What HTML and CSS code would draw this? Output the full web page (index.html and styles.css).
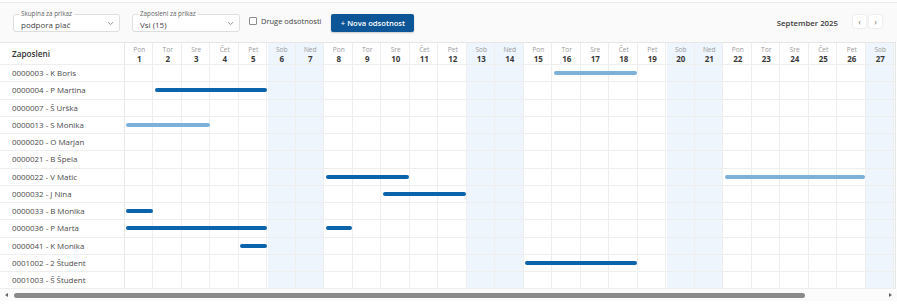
FILE: index.html
```html
<!DOCTYPE html>
<html>

<head>
	<link rel="stylesheet" href="styles.css">
</head>

<body>
	<div class="page">
		<div class="toolbar">
			<div class="select sel-group">
				<span class="select-label">Skupina za prikaz</span>
				<span class="select-value">podpora plač</span>
				<svg class="chev" width="7" height="5" viewBox="0 0 7 5"><path d="M1 1.2 L3.5 3.6 L6 1.2" fill="none" stroke="#8a8a8a" stroke-width="0.9"/></svg>
			</div>
			<div class="select sel-emp">
				<span class="select-label">Zaposleni za prikaz</span>
				<span class="select-value">Vsi (15)</span>
				<svg class="chev" width="7" height="5" viewBox="0 0 7 5"><path d="M1 1.2 L3.5 3.6 L6 1.2" fill="none" stroke="#8a8a8a" stroke-width="0.9"/></svg>
			</div>
			<label class="check"><span class="box"></span>Druge odsotnosti</label>
			<button class="btn-new">+ Nova odsotnost</button>
			<div class="month">September 2025</div>
			<div class="nav">
				<span class="nav-btn">&#8249;</span>
				<span class="nav-btn">&#8250;</span>
			</div>
		</div>

		<div class="grid-wrap">
			<div class="grid">
				<div class="row head">
					<div class="name">Zaposleni</div>
					<div class="days">
						<div class="day"><span>Pon</span><b>1</b></div>
						<div class="day"><span>Tor</span><b>2</b></div>
						<div class="day"><span>Sre</span><b>3</b></div>
						<div class="day"><span>Čet</span><b>4</b></div>
						<div class="day"><span>Pet</span><b>5</b></div>
						<div class="day"><span>Sob</span><b>6</b></div>
						<div class="day"><span>Ned</span><b>7</b></div>
						<div class="day"><span>Pon</span><b>8</b></div>
						<div class="day"><span>Tor</span><b>9</b></div>
						<div class="day"><span>Sre</span><b>10</b></div>
						<div class="day"><span>Čet</span><b>11</b></div>
						<div class="day"><span>Pet</span><b>12</b></div>
						<div class="day"><span>Sob</span><b>13</b></div>
						<div class="day"><span>Ned</span><b>14</b></div>
						<div class="day"><span>Pon</span><b>15</b></div>
						<div class="day"><span>Tor</span><b>16</b></div>
						<div class="day"><span>Sre</span><b>17</b></div>
						<div class="day"><span>Čet</span><b>18</b></div>
						<div class="day"><span>Pet</span><b>19</b></div>
						<div class="day"><span>Sob</span><b>20</b></div>
						<div class="day"><span>Ned</span><b>21</b></div>
						<div class="day"><span>Pon</span><b>22</b></div>
						<div class="day"><span>Tor</span><b>23</b></div>
						<div class="day"><span>Sre</span><b>24</b></div>
						<div class="day"><span>Čet</span><b>25</b></div>
						<div class="day"><span>Pet</span><b>26</b></div>
						<div class="day"><span>Sob</span><b>27</b></div>
					</div>
				</div>

				<div class="row">
					<div class="name">0000003 - K Boris</div>
					<div class="days"><span class="bar light" style="grid-column: 16 / 19"></span></div>
				</div>
				<div class="row">
					<div class="name">0000004 - P Martina</div>
					<div class="days"><span class="bar" style="grid-column: 2 / 6"></span></div>
				</div>
				<div class="row">
					<div class="name">0000007 - Š Urška</div>
					<div class="days"></div>
				</div>
				<div class="row">
					<div class="name">0000013 - S Monika</div>
					<div class="days"><span class="bar light" style="grid-column: 1 / 4"></span></div>
				</div>
				<div class="row">
					<div class="name">0000020 - O Marjan</div>
					<div class="days"></div>
				</div>
				<div class="row">
					<div class="name">0000021 - B Špela</div>
					<div class="days"></div>
				</div>
				<div class="row">
					<div class="name">0000022 - V Matic</div>
					<div class="days">
						<span class="bar" style="grid-column: 8 / 11"></span>
						<span class="bar light" style="grid-column: 22 / 27"></span>
					</div>
				</div>
				<div class="row">
					<div class="name">0000032 - J Nina</div>
					<div class="days"><span class="bar" style="grid-column: 10 / 13"></span></div>
				</div>
				<div class="row">
					<div class="name">0000033 - B Monika</div>
					<div class="days"><span class="bar" style="grid-column: 1 / 2"></span></div>
				</div>
				<div class="row">
					<div class="name">0000036 - P Marta</div>
					<div class="days">
						<span class="bar" style="grid-column: 1 / 6"></span>
						<span class="bar" style="grid-column: 8 / 9"></span>
					</div>
				</div>
				<div class="row">
					<div class="name">0000041 - K Monika</div>
					<div class="days"><span class="bar" style="grid-column: 5 / 6"></span></div>
				</div>
				<div class="row">
					<div class="name">0001002 - 2 Študent</div>
					<div class="days"><span class="bar" style="grid-column: 15 / 19"></span></div>
				</div>
				<div class="row">
					<div class="name">0001003 - Š Študent</div>
					<div class="days"></div>
				</div>
			</div>
		</div>

		<div class="hscroll">
			<span class="arrow left"></span>
			<div class="track"><div class="thumb"></div></div>
			<span class="arrow right"></span>
		</div>
	</div>
</body>

</html>
```

FILE: styles.css
```css
body {
	margin: 0;
	background: #ffffff;
	font-family: "Open Sans", "Noto Sans", sans-serif;
	color: #333333;
}

.page {
	width: 897px;
	height: 304px;
	padding-top: 2px;
	box-sizing: border-box;
	overflow: hidden;
}

.toolbar {
	height: 40px;
	border-top: 1px solid #ececec;
	background: #fafafa;
	display: flex;
	align-items: center;
	padding: 0 15px 0 13px;
	box-sizing: border-box;
}

.select {
	position: relative;
	height: 18px;
	border: 1px solid #dedede;
	border-radius: 3px;
	background: #ffffff;
	box-sizing: border-box;
	display: flex;
	align-items: center;
	padding: 3px 0 0 7px;
}

.sel-group {
	width: 107px;
}

.sel-emp {
	width: 108px;
	margin-left: 12px;
}

.select-label {
	position: absolute;
	left: 5px;
	top: -5px;
	padding: 0 2px;
	font-size: 6.3px;
	line-height: 8px;
	color: #666666;
	background: linear-gradient(#fafafa 50%, #ffffff 50%);
}

.select-value {
	font-size: 8px;
	color: #444444;
	flex: 1;
}

.chev {
	margin-right: 5px;
	margin-top: -2px;
}

.check {
	display: flex;
	align-items: center;
	margin-left: 9px;
	font-size: 7.5px;
	color: #444444;
	margin-top: -4px;
}

.box {
	width: 6px;
	height: 6px;
	border: 1px solid #8c8c8c;
	border-radius: 1px;
	background: #ffffff;
	margin-right: 4px;
	margin-top: 1px;
}

.btn-new {
	margin-left: 10px;
	width: 83px;
	height: 18px;
	border: none;
	border-radius: 2px;
	background: #0c5697;
	color: #ffffff;
	font-family: "Open Sans", sans-serif;
	font-size: 7.6px;
	font-weight: 600;
	padding: 0;
	box-shadow: 0 1px 2px rgba(0, 0, 0, 0.2);
}

.month {
	margin-left: auto;
	font-size: 7.8px;
	font-weight: 600;
	color: #3a3a3a;
}

.nav {
	display: flex;
	gap: 3px;
	margin-left: 15px;
	margin-top: -3px;
}

.nav-btn {
	width: 13px;
	height: 13px;
	border-radius: 2px;
	background: #ffffff;
	box-shadow: 0 0 2px rgba(0, 0, 0, 0.18);
	display: flex;
	align-items: center;
	justify-content: center;
	font-size: 9px;
	line-height: 9px;
	color: #777777;
}

.grid-wrap {
	border-top: 1px solid #e6e6e6;
	overflow: hidden;
	width: 895px;
	border-right: 1px solid #e6e6e6;
}

/* column lines and weekend shading drawn once for the whole table */
.grid {
	width: 894.5px;
	background:
		repeating-linear-gradient(90deg, transparent 0, transparent 27.5px, #eeeeee 27.5px, #eeeeee 28.5px) 125px 0 / 769.5px 100% no-repeat,
		repeating-linear-gradient(90deg, transparent 0, transparent 142.5px, #eef5fc 142.5px, #eef5fc 199.5px) 125px 0 / 769.5px 100% no-repeat;
}

.row {
	display: flex;
	height: 17.25px;
	border-bottom: 1px solid #eeeeee;
	box-sizing: border-box;
}

.row.head {
	height: 22px;
}

.name {
	width: 125px;
	flex-shrink: 0;
	box-sizing: border-box;
	border-right: 1px solid #e8e8e8;
	padding-left: 12px;
	font-size: 7.9px;
	color: #4a4a4a;
	display: flex;
	align-items: center;
}

.head .name {
	font-weight: 600;
	font-size: 8.2px;
	color: #333333;
}

.days {
	display: grid;
	grid-template-columns: repeat(27, 28.5px);
	align-items: center;
}

.head .days {
	align-items: stretch;
}

.day {
	display: flex;
	flex-direction: column;
	align-items: center;
	justify-content: center;
	line-height: 9px;
}

.day span {
	font-size: 6.6px;
	color: #9a9a9a;
}

.day b {
	font-size: 8px;
	font-weight: 700;
	color: #3a3a3a;
}

.bar {
	grid-row: 1;
	height: 4px;
	border-radius: 2px;
	background: #0b63ab;
	margin: 0 1px;
}

.bar.light {
	background: #7db1d9;
}

.hscroll {
	display: flex;
	align-items: center;
	height: 12px;
	padding: 0 5px;
	background: #fbfbfb;
}

.arrow {
	width: 0;
	height: 0;
	border-top: 2.5px solid transparent;
	border-bottom: 2.5px solid transparent;
}

.arrow.left {
	border-right: 3px solid #666666;
}

.arrow.right {
	border-left: 3px solid #666666;
}

.track {
	flex: 1;
	margin: 0 6px;
}

.thumb {
	width: 791px;
	height: 5px;
	border-radius: 3px;
	background: #8a8a8a;
}
```
